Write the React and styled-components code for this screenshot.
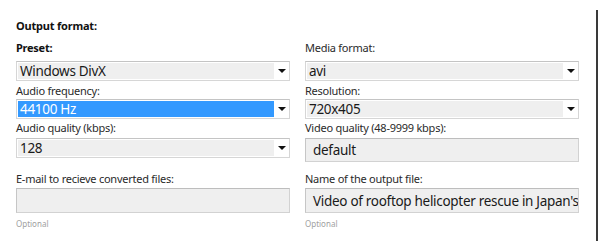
import React from "react";
import styled, { createGlobalStyle } from "styled-components";

const Global = createGlobalStyle`
    html, body {
        margin: 0;
        padding: 0;
        background: #fff;
    }
    body {
        font-family: "Noto Sans", "DejaVu Sans", sans-serif;
        color: #222;
    }
`;

const Frame = styled.div`
    width: 596px;
    height: 231px;
    margin-top: 10px;
    border-right: 2px solid #3a3a3a;
`;

const Form = styled.div`
    padding: 8px 0 0 16px;
`;

const Heading = styled.div`
    font-size: 11px;
    font-weight: bold;
    line-height: 15px;
    letter-spacing: -0.2px;
    color: #111;
    margin-bottom: 7px;
`;

const Grid = styled.div`
    display: grid;
    grid-template-columns: 274px 274px;
    column-gap: 15px;
    align-items: start;
`;

const Field = styled.div`
    display: flex;
    flex-direction: column;
    margin-bottom: ${({ gap }) => (gap ? gap : "0px")};
`;

const Label = styled.div`
    font-size: 11px;
    line-height: 15px;
    letter-spacing: -0.25px;
    font-weight: ${({ bold }) => (bold ? "bold" : "normal")};
    color: ${({ bold }) => (bold ? "#111" : "#2a2a2a")};
    margin-bottom: ${({ space }) => (space ? space : "2px")};
    white-space: nowrap;
`;

const SelectBox = styled.div`
    height: 20px;
    box-sizing: border-box;
    border: 1px solid #d6d6d6;
    border-top-color: #c4c4c4;
    background: #fff;
    display: flex;
    align-items: stretch;
`;

const SelectValue = styled.div`
    flex: 1;
    margin: 1px 0 1px 1px;
    padding-left: 2px;
    background: ${({ active }) => (active ? "#3399ff" : "#efefef")};
    color: ${({ active }) => (active ? "#fff" : "#1a1a1a")};
    font-size: 13.5px;
    letter-spacing: -0.3px;
    line-height: 16px;
    white-space: nowrap;
    overflow: hidden;
`;

const Arrow = styled.div`
    width: 15px;
    display: flex;
    align-items: center;
    justify-content: center;
    &::after {
        content: "";
        border-left: 4px solid transparent;
        border-right: 4px solid transparent;
        border-top: 4px solid #111;
    }
`;

const TextBox = styled.div`
    height: ${({ h }) => (h ? h : "25px")};
    box-sizing: border-box;
    border: 1px solid #d2d2d2;
    border-top-color: #bdbdbd;
    border-left-color: #c6c6c6;
    background: #efefef;
    font-size: 13.5px;
    letter-spacing: -0.3px;
    padding-left: 7px;
    color: #1a1a1a;
    white-space: nowrap;
    overflow: hidden;
    display: flex;
    align-items: center;
`;

const Hint = styled.div`
    font-size: 8px;
    line-height: 12px;
    color: #a0a0a0;
    margin-top: 5px;
`;

const Select = ({ value, active }) => (
    <SelectBox>
        <SelectValue active={active}>{value}</SelectValue>
        <Arrow />
    </SelectBox>
);

export default function App() {
    return (
        <>
            <Global />
            <Frame>
                <Form>
                    <Heading>Output format:</Heading>
                    <Grid>
                        <Field gap="2px">
                            <Label bold space="6px">Preset:</Label>
                            <Select value="Windows DivX" />
                        </Field>
                        <Field gap="2px">
                            <Label space="6px">Media format:</Label>
                            <Select value="avi" />
                        </Field>
                        <Field gap="1px">
                            <Label space="1px">Audio frequency:</Label>
                            <Select value="44100 Hz" active />
                        </Field>
                        <Field gap="1px">
                            <Label space="1px">Resolution:</Label>
                            <Select value="720x405" />
                        </Field>
                        <Field gap="9px">
                            <Label space="3px">Audio quality (kbps):</Label>
                            <Select value="128" />
                        </Field>
                        <Field gap="9px">
                            <Label space="3px">Video quality (48-9999 kbps):</Label>
                            <TextBox h="24px">default</TextBox>
                        </Field>
                        <Field>
                            <Label space="2px">E-mail to recieve converted files:</Label>
                            <TextBox />
                            <Hint>Optional</Hint>
                        </Field>
                        <Field>
                            <Label space="2px">Name of the output file:</Label>
                            <TextBox>Video of rooftop helicopter rescue in Japan's tsunami</TextBox>
                            <Hint>Optional</Hint>
                        </Field>
                    </Grid>
                </Form>
            </Frame>
        </>
    );
}
